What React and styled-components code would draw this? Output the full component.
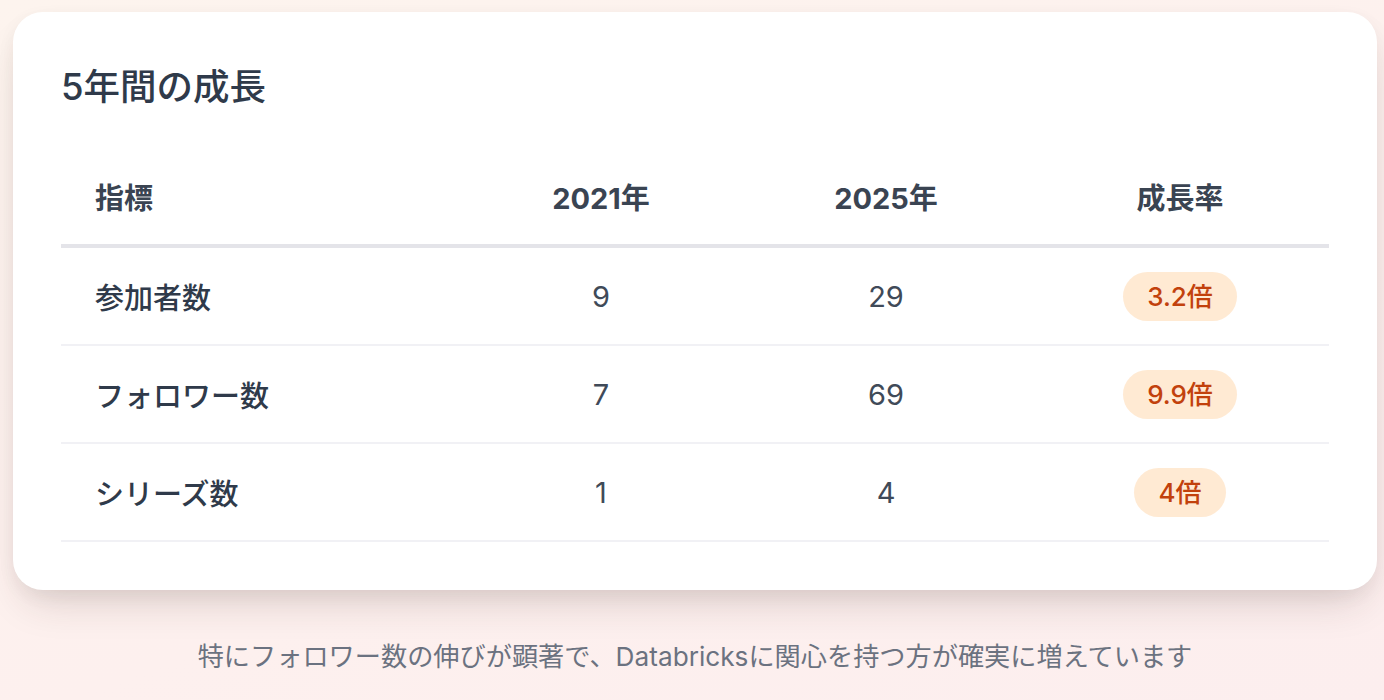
import React from 'react';
import styled, { createGlobalStyle } from 'styled-components';

const GlobalStyle = createGlobalStyle`
  html, body {
    margin: 0;
    padding: 0;
  }
  body {
    font-family: Inter, "Noto Sans CJK JP", sans-serif;
    background: linear-gradient(160deg, #fdf4ee 0%, #fdf0ee 60%, #fceeee 100%);
    min-height: 700px;
  }
`;

const Page = styled.div`
  padding: 12px 7px 0 13px;
  min-height: 700px;
  box-sizing: border-box;
`;

const Card = styled.section`
  background: #ffffff;
  border-radius: 30px;
  padding: 48px;
  box-shadow: 0 22px 40px -12px rgba(60, 40, 35, 0.18), 0 6px 18px rgba(60, 40, 35, 0.05);
`;

const Title = styled.h2`
  margin: 0 0 34px;
  font-size: 36.5px;
  line-height: 54px;
  font-weight: 500;
  color: #2f3a4a;
`;

const Table = styled.div`
  display: grid;
  grid-template-columns: 400px 280px 290px 1fr;
`;

const Row = styled.div`
  display: contents;
`;

const Cell = styled.div`
  height: 96px;
  display: flex;
  align-items: center;
  justify-content: ${p => (p.$left ? 'flex-start' : 'center')};
  padding-left: ${p => (p.$left ? '34px' : '0')};
  border-bottom: ${p => (p.$head ? '4px solid #e4e4e9' : '2px solid #f1f1f5')};
  font-size: 29px;
  font-weight: ${p => (p.$head ? 700 : p.$left ? 500 : 400)};
  color: ${p => (p.$head ? '#3a4452' : p.$left ? '#2f3a4a' : '#404a58')};
`;

const Badge = styled.span`
  display: inline-block;
  background: #ffead3;
  color: #c2410c;
  font-size: 26px;
  font-weight: 500;
  line-height: 33px;
  padding: 8px 24px;
  border-radius: 999px;
`;

const Note = styled.p`
  margin: 47px 0 0;
  text-align: center;
  font-size: 26.2px;
  line-height: 40px;
  color: #6b7280;
`;

const rows = [
  { label: '参加者数', y2021: '9', y2025: '29', rate: '3.2倍' },
  { label: 'フォロワー数', y2021: '7', y2025: '69', rate: '9.9倍' },
  { label: 'シリーズ数', y2021: '1', y2025: '4', rate: '4倍' },
];

const App = () => (
  <Page>
    <GlobalStyle />
    <Card>
      <Title>5年間の成長</Title>
      <Table>
        <Row>
          <Cell $head $left>指標</Cell>
          <Cell $head>2021年</Cell>
          <Cell $head>2025年</Cell>
          <Cell $head>成長率</Cell>
        </Row>
        {rows.map(r => (
          <Row key={r.label}>
            <Cell $left>{r.label}</Cell>
            <Cell>{r.y2021}</Cell>
            <Cell>{r.y2025}</Cell>
            <Cell><Badge>{r.rate}</Badge></Cell>
          </Row>
        ))}
      </Table>
    </Card>
    <Note>特にフォロワー数の伸びが顕著で、Databricksに関心を持つ方が確実に増えています</Note>
  </Page>
);

export default App;
